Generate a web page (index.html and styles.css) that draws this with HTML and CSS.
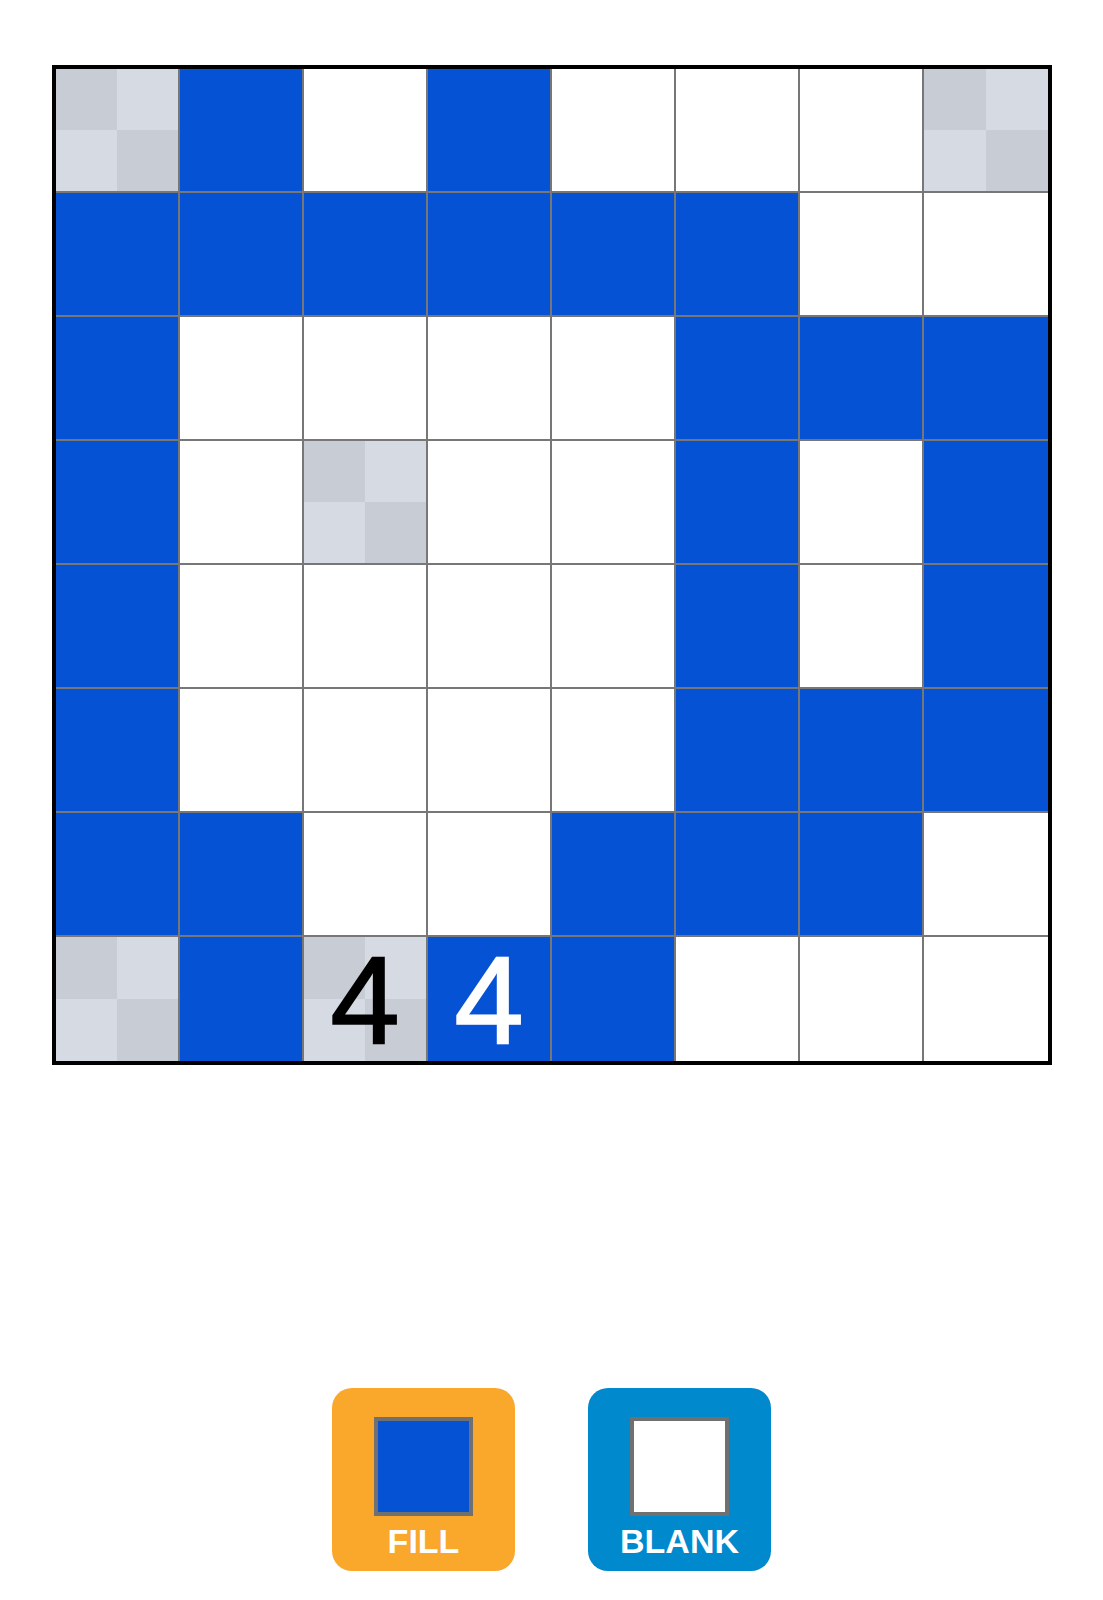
FILE: index.html
```html
<!DOCTYPE html>
<html>
<head>
<meta charset="utf-8">
<link rel="stylesheet" href="styles.css">
</head>
<body>
<div class="page">
  <div class="board">
    <div class="cell g"></div><div class="cell b"></div><div class="cell w"></div><div class="cell b"></div><div class="cell w"></div><div class="cell w"></div><div class="cell w"></div><div class="cell g"></div>
    <div class="cell b"></div><div class="cell b"></div><div class="cell b"></div><div class="cell b"></div><div class="cell b"></div><div class="cell b"></div><div class="cell w"></div><div class="cell w"></div>
    <div class="cell b"></div><div class="cell w"></div><div class="cell w"></div><div class="cell w"></div><div class="cell w"></div><div class="cell b"></div><div class="cell b"></div><div class="cell b"></div>
    <div class="cell b"></div><div class="cell w"></div><div class="cell g"></div><div class="cell w"></div><div class="cell w"></div><div class="cell b"></div><div class="cell w"></div><div class="cell b"></div>
    <div class="cell b"></div><div class="cell w"></div><div class="cell w"></div><div class="cell w"></div><div class="cell w"></div><div class="cell b"></div><div class="cell w"></div><div class="cell b"></div>
    <div class="cell b"></div><div class="cell w"></div><div class="cell w"></div><div class="cell w"></div><div class="cell w"></div><div class="cell b"></div><div class="cell b"></div><div class="cell b"></div>
    <div class="cell b"></div><div class="cell b"></div><div class="cell w"></div><div class="cell w"></div><div class="cell b"></div><div class="cell b"></div><div class="cell b"></div><div class="cell w"></div>
    <div class="cell g"></div><div class="cell b"></div><div class="cell g num">4</div><div class="cell b num">4</div><div class="cell b"></div><div class="cell w"></div><div class="cell w"></div><div class="cell w"></div>
  </div>
  <div class="tools">
    <div class="tool fill">
      <div class="swatch swatch-fill"></div>
      <div class="label">FILL</div>
    </div>
    <div class="tool blank">
      <div class="swatch swatch-blank"></div>
      <div class="label">BLANK</div>
    </div>
  </div>
</div>
</body>
</html>
```
FILE: styles.css
```css
html, body {
  margin: 0;
  padding: 0;
  background: #ffffff;
  font-family: "Liberation Sans", Arial, sans-serif;
}

.page {
  width: 1103px;
  padding-top: 65px;
}

.board {
  box-sizing: border-box;
  margin-left: 52px;
  width: 1000px;
  height: 1000px;
  border: 4px solid #000000;
  background: #777777;
  display: grid;
  grid-template-columns: repeat(7, 122px) 124px;
  grid-template-rows: repeat(7, 122px) 124px;
  gap: 2px;
}

.cell {
  display: flex;
  align-items: center;
  justify-content: center;
}

.cell.w { background: #ffffff; }
.cell.b { background: #0652d5; color: #ffffff; }
.cell.g {
  color: #000000;
  background:
    linear-gradient(#c8ccd4, #c8ccd4) 0 0 / 50% 50% no-repeat,
    linear-gradient(#c8ccd4, #c8ccd4) 100% 100% / 50% 50% no-repeat,
    #d6dae2;
}

.num {
  font-size: 125px;
  line-height: 1;
  -webkit-text-stroke: 1.6px currentColor;
}

.tools {
  margin-top: 323px;
  display: flex;
  justify-content: center;
  gap: 73px;
}

.tool {
  width: 183px;
  height: 183px;
  border-radius: 20px;
  display: flex;
  flex-direction: column;
  align-items: center;
  padding-top: 29px;
  box-sizing: border-box;
}

.fill { background: #f9a82c; }
.blank { background: #0189ce; }

.swatch {
  box-sizing: border-box;
  width: 99px;
  height: 99px;
  border: 4px solid #707070;
}

.swatch-fill { background: #0652d5; }
.swatch-blank { background: #ffffff; }

.label {
  margin-top: 5px;
  font-size: 34px;
  line-height: 40px;
  font-weight: bold;
  color: #ffffff;
}
```
